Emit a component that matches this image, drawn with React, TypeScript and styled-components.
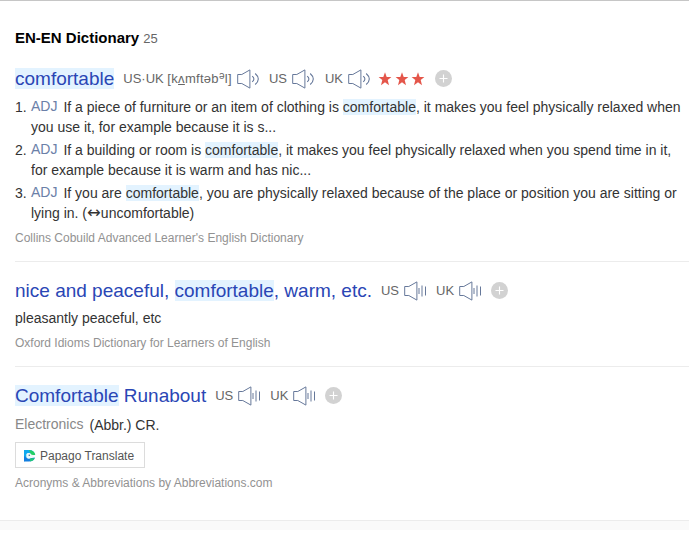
import React from "react";
import styled, { createGlobalStyle } from "styled-components";

const GlobalStyle = createGlobalStyle`
  * { box-sizing: border-box; }
  body {
    margin: 0;
    background: #fff;
    font-family: "Liberation Sans", Arial, sans-serif;
    color: #333;
    overflow: hidden;
  }
`;

const Page = styled.main`
  width: 689px;
  height: 551px;
  border-top: 1px solid #c6c6c6;
  display: flex;
  flex-direction: column;
`;

const Header = styled.header`
  display: flex;
  align-items: baseline;
  gap: 4px;
  height: 20px;
  margin: 27px 0 0 15px;
  line-height: 20px;
`;

const Heading = styled.h2`
  margin: 0;
  font-size: 15px;
  font-weight: 700;
  color: #000;
`;

const Count = styled.span`
  font-size: 13px;
  color: #666;
`;

const Entry = styled.section<{ $height: number; $top: number }>`
  display: flex;
  flex-direction: column;
  height: ${(p) => p.$height}px;
  margin-left: 15px;
  padding-top: ${(p) => p.$top}px;
  border-bottom: 1px solid #ececec;

  &:last-of-type { border-bottom: 0; }
`;

const TitleRow = styled.div`
  display: flex;
  align-items: center;
  height: 22px;
  white-space: nowrap;
`;

const Word = styled.a`
  font-size: 19px;
  line-height: 22px;
  color: #2a46b5;
`;

const Mark = styled.mark`
  color: inherit;
  background: #e3f3ff;
`;

const WordMark = styled(Mark)`
  display: inline-block;
  height: 21px;
  line-height: 22px;
`;

const Sound = styled.span<{ $gap: number }>`
  display: flex;
  align-items: center;
  gap: 5px;
  margin-left: ${(p) => p.$gap}px;
  font-size: 13px;
  line-height: 20px;
  color: #666;

  svg { display: block; flex: none; }
`;

const Phonetic = styled.span`
  font-size: 13px;
`;

const Ipa = styled.span`
  letter-spacing: 0.3px;

  u { text-underline-offset: 1px; }
  sup { font-size: 10px; line-height: 0; vertical-align: 4px; }
`;

const Stars = styled.span`
  display: flex;
  gap: 0.5px;
  margin-left: 6px;

  svg { display: block; }
`;

const AddButton = styled.button<{ $gap: number }>`
  width: 17px;
  height: 17px;
  margin: 0 0 1px ${(p) => p.$gap}px;
  padding: 0;
  border: 0;
  border-radius: 50%;
  background: #d2d2d2;

  svg { display: block; }
`;

const Meanings = styled.ol`
  display: flex;
  flex-direction: column;
  gap: 3px;
  margin: 7px 0 0;
  padding: 0;
  list-style: none;
`;

const Meaning = styled.li`
  display: flex;
  font-size: 14px;
  line-height: 20px;
  white-space: nowrap;
`;

const Num = styled.span`
  width: 16px;
  flex: none;
`;

const Arrow = styled.span`
  font-family: "DejaVu Sans", sans-serif;
  font-size: 16.5px;
  line-height: 0;
`;

const PartOfSpeech = styled.span`
  display: inline-block;
  line-height: 18px;
  vertical-align: 1px;
  margin-right: 6px;
  color: #6b80a8;
`;

const Definition = styled.p<{ $top: number }>`
  margin: ${(p) => p.$top}px 0 0;
  font-size: 14px;
  line-height: 20px;
`;

const Category = styled.span`
  display: inline-block;
  line-height: 18px;
  vertical-align: 1px;
  margin-right: 6px;
  color: #888;
`;

const Source = styled.p<{ $top: number }>`
  margin: ${(p) => p.$top}px 0 0;
  font-size: 12px;
  line-height: 16px;
  color: #929292;
`;

const TranslateButton = styled.button`
  display: flex;
  align-items: center;
  gap: 4px;
  width: 130px;
  height: 26px;
  margin-top: 7px;
  padding: 2px 0 0 7px;
  border: 1px solid #dcdcdc;
  background: #fff;
  font: 12px "Liberation Sans", Arial, sans-serif;
  color: #555;
  white-space: nowrap;
`;

const Footer = styled.footer`
  height: 10px;
  border-top: 1px solid #ececec;
  background: #fafafa;
`;

function Speaker({ wave = false }: { wave?: boolean }) {
  return (
    <svg width="23" height="20" viewBox="0 0 23 20" fill="none" stroke="#66789a">
      <path d="M.7 5.5H4.8L12.9 .9V19.1L4.8 14.5H.7Z" strokeWidth="1" />
      {wave ? (
        <path d="M15 7V13M18 4.5V15.5M21.5 5.5V14.5" strokeWidth="1" />
      ) : (
        <path d="M15.2 7.2Q18.6 10 15.2 12.8M18.2 4.5Q24.4 10 18.2 15.5" strokeWidth="1.1" />
      )}
    </svg>
  );
}

function Star() {
  return (
    <svg width="16" height="14" viewBox="0 0 16 14">
      <path d="M8 .3 9.7 5.1H14.4L10.7 8.1 12 13.2 8 10.2 4 13.2 5.3 8.1 1.6 5.1H6.3Z" fill="#e4564a" />
    </svg>
  );
}

function Add({ gap }: { gap: number }) {
  return (
    <AddButton $gap={gap} aria-label="Add">
      <svg width="17" height="17" viewBox="0 0 17 17" stroke="#fff" strokeWidth="1.1">
        <path d="M4.5 8.5H12.5M8.5 4.5V12.5" />
      </svg>
    </AddButton>
  );
}

function PapagoIcon() {
  return (
    <svg width="13" height="12" viewBox="0 0 13 12">
      <path d="M1 0H6.5C9.5 0 11.5 2 12 4.5L8 6 1 11.5Z" fill="#10a9ee" />
      <path d="M6 0C9.6.1 11.8 2.1 12.3 5L8 5Z" fill="#24cf63" />
      <path d="M1 6 5 8.5 12 7.6C11 10.2 9 11.6 6 11.6H1Z" fill="#147fe0" />
      <path d="M6.8 8.3H11.8C11 10.3 9.3 11.2 7.2 11.5Z" fill="#20c878" />
      <path d="M3.3 4.3C4 2.5 7.2 2.5 8.2 4.4L12.4 5.7 8.2 7.4C6.8 9.2 4 8.8 3.3 7Z" fill="#eef9fa" />
      <circle cx="6.3" cy="5.2" r=".8" fill="#367a9f" />
    </svg>
  );
}

export default function App() {
  return (
    <>
      <GlobalStyle />
      <Page>
        <Header>
          <Heading>EN-EN Dictionary</Heading>
          <Count>25</Count>
        </Header>

        <Entry $height={214} $top={20}>
          <TitleRow>
            <Word><WordMark>comfortable</WordMark></Word>
            <Sound $gap={9}>
              <Phonetic>US·UK <Ipa>[k<u>ʌ</u>mftəb<sup>ə</sup>l]</Ipa></Phonetic>
              <Speaker />
            </Sound>
            <Sound $gap={9}>US<Speaker /></Sound>
            <Sound $gap={10}>UK<Speaker /></Sound>
            <Stars><Star /><Star /><Star /></Stars>
            <Add gap={9} />
          </TitleRow>
          <Meanings>
            <Meaning>
              <Num>1.</Num>
              <span>
                <PartOfSpeech>ADJ</PartOfSpeech>If a piece of furniture or an item of clothing is <Mark>comfortable</Mark>, it makes you feel physically relaxed when<br />
                you use it, for example because it is s...
              </span>
            </Meaning>
            <Meaning>
              <Num>2.</Num>
              <span>
                <PartOfSpeech>ADJ</PartOfSpeech>If a building or room is <Mark>comfortable</Mark>, it makes you feel physically relaxed when you spend time in it,<br />
                for example because it is warm and has nic...
              </span>
            </Meaning>
            <Meaning>
              <Num>3.</Num>
              <span>
                <PartOfSpeech>ADJ</PartOfSpeech>If you are <Mark>comfortable</Mark>, you are physically relaxed because of the place or position you are sitting or<br />
                lying in. (<Arrow>↔</Arrow>uncomfortable)
              </span>
            </Meaning>
          </Meanings>
          <Source $top={7}>Collins Cobuild Advanced Learner's English Dictionary</Source>
        </Entry>

        <Entry $height={105} $top={18}>
          <TitleRow>
            <Word>nice and peaceful, <WordMark>comfortable</WordMark>, warm, etc.</Word>
            <Sound $gap={9}>US<Speaker wave /></Sound>
            <Sound $gap={9}>UK<Speaker wave /></Sound>
            <Add gap={9} />
          </TitleRow>
          <Definition $top={6}>pleasantly peaceful, etc</Definition>
          <Source $top={7}>Oxford Idioms Dictionary for Learners of English</Source>
        </Entry>

        <Entry $height={153} $top={18}>
          <TitleRow>
            <Word><WordMark>Comfortable</WordMark> Runabout</Word>
            <Sound $gap={9}>US<Speaker wave /></Sound>
            <Sound $gap={9}>UK<Speaker wave /></Sound>
            <Add gap={9} />
          </TitleRow>
          <Definition $top={8}><Category>Electronics</Category>(Abbr.) CR.</Definition>
          <TranslateButton><PapagoIcon />Papago Translate</TranslateButton>
          <Source $top={7}>Acronyms &amp; Abbreviations by Abbreviations.com</Source>
        </Entry>
        <Footer />
      </Page>
    </>
  );
}
